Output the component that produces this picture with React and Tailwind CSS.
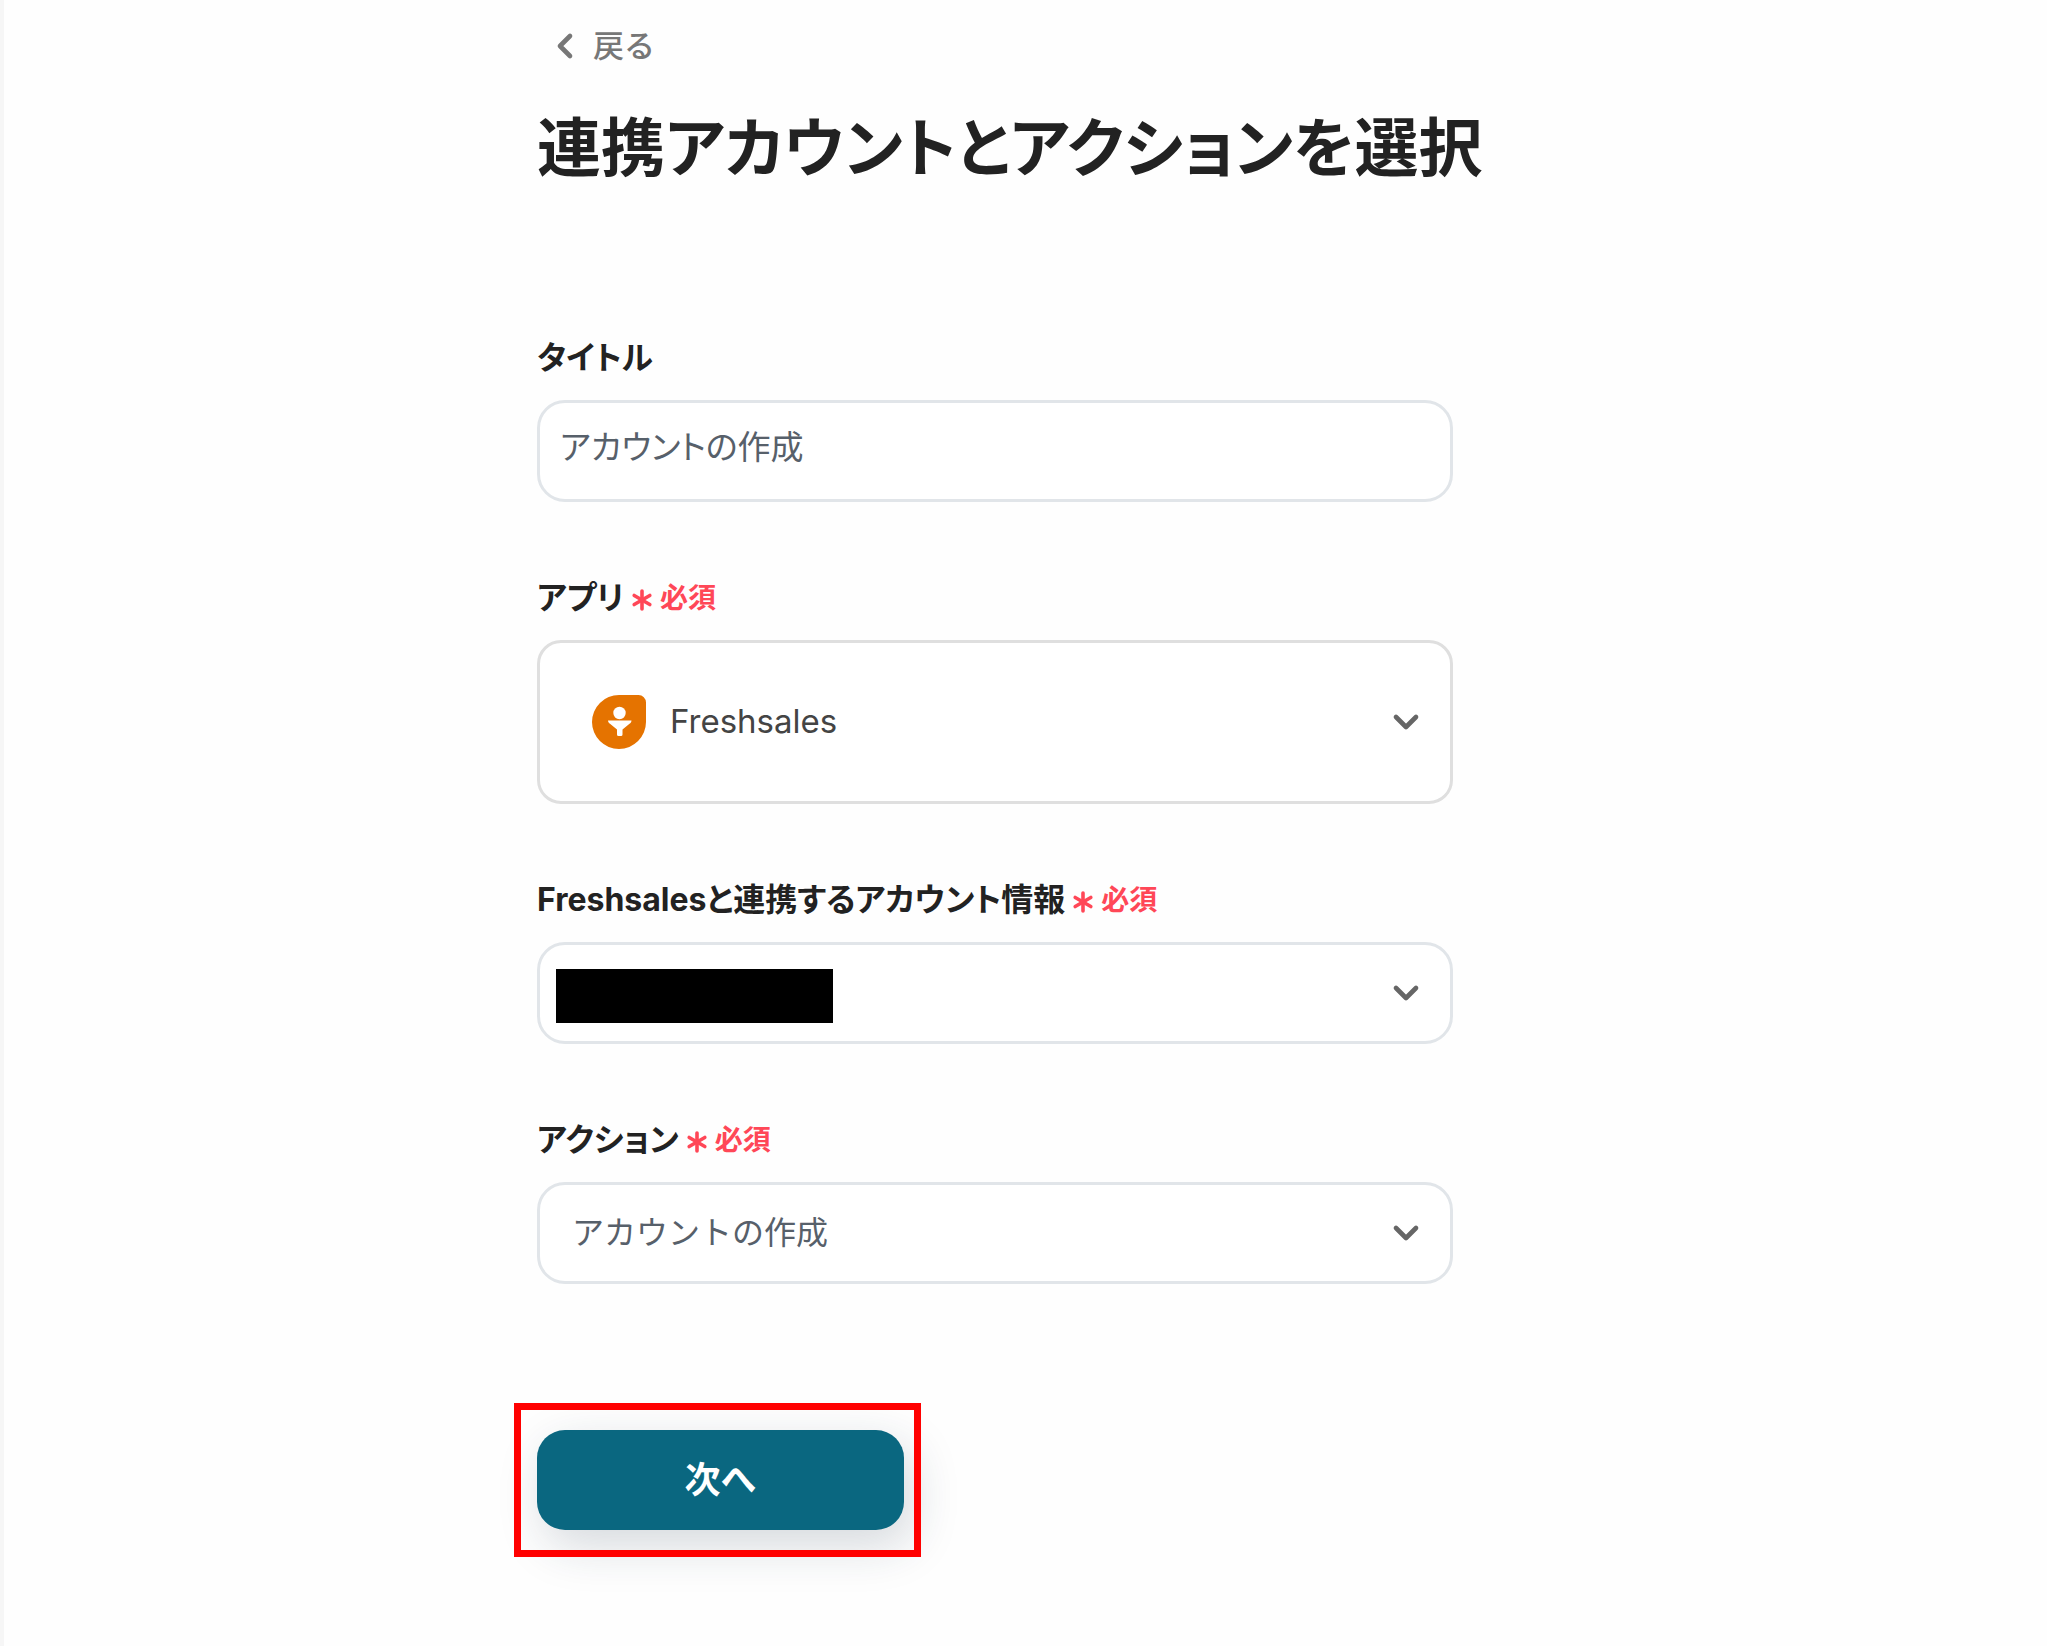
import React, { useState } from "react";
import { Asterisk, ChevronDown, ChevronLeft } from "lucide-react";

function FreshsalesLogo() {
  return (
    <svg viewBox="0 0 54 54" className="h-[54px] w-[54px] shrink-0" aria-hidden="true">
      <path
        d="M27 0H46.500A7.500 7.500 0 0 1 54 7.500V27A27 27 0 1 1 27 0Z"
        fill="#e57300"
      />
      <circle cx="27.500" cy="18" r="6.200" fill="#fff" />
      <path
        d="M16 25.500H39.500C39.500 27 38.500 28 37.500 28.800L30.500 34.500V39.500Q30.500 41 29 41H26.500Q25 41 25 39.500V34.500L18 28.800C17 28 16 27 16 25.500Z"
        fill="#fff"
      />
    </svg>
  );
}

function FieldLabel({ htmlFor, text, required }) {
  return (
    <label htmlFor={htmlFor} className="flex h-11 items-center text-[#222]">
      <span className="text-[32px] leading-11 font-bold [font-feature-settings:'palt']">
        {text}
      </span>
      {required && (
        <span className="flex items-center text-[28px] leading-11 font-bold text-[#ff4757]">
          <Asterisk size={36} strokeWidth={2.4} className="mt-1" />
          必須
        </span>
      )}
    </label>
  );
}

function SelectField({ id, value, className, selectClass, logo, masked }) {
  return (
    <div className={`relative mt-5 flex items-center border-3 bg-white ${className}`}>
      {logo}
      <select
        id={id}
        defaultValue={value}
        className={`h-full w-full appearance-none bg-transparent pr-20 outline-none ${selectClass}`}
      >
        <option value={value}>{value}</option>
      </select>
      {masked && (
        <span className="pointer-events-none absolute top-6 left-4 h-[54px] w-[277px] bg-black" />
      )}
      <ChevronDown
        size={40}
        strokeWidth={2.8}
        className="pointer-events-none absolute right-6 text-[#666]"
      />
    </div>
  );
}

function App() {
  const [title, setTitle] = useState("アカウントの作成");

  return (
    <div className="min-h-screen border-l-4 border-[#f6f6f6] bg-[#fefefe] font-[Inter,'Noto_Sans_CJK_JP',sans-serif]">
      <main className="mx-auto max-w-[977px] pt-[22px] pb-16">
        <a
          href="#back"
          className="ml-2 inline-flex items-center gap-2 text-[31px] leading-12 font-medium text-[#777]"
        >
          <ChevronLeft size={40} strokeWidth={2.8} />
          戻る
        </a>
        <h1 className="mt-7 text-[64px] leading-24 font-bold whitespace-nowrap text-[#222] [font-feature-settings:'palt']">
          連携アカウントとアクションを選択
        </h1>

        <form className="mt-[140px] max-w-[916px]" onSubmit={(e) => e.preventDefault()}>
          <div>
            <FieldLabel htmlFor="title" text="タイトル" />
            <input
              id="title"
              type="text"
              value={title}
              onChange={(e) => setTitle(e.target.value)}
              className="mt-5 h-[102px] w-full rounded-[28px] border-3 border-[#e1e5e9] bg-white px-5 pb-3 text-[33px] text-[#57606a] outline-none [font-feature-settings:'palt']"
            />
          </div>

          <div className="mt-[74px]">
            <FieldLabel htmlFor="app" text="アプリ" required />
            <SelectField
              id="app"
              value="Freshsales"
              logo={<FreshsalesLogo />}
              className="h-[164px] rounded-3xl border-[#dfdfdf] pl-[52px]"
              selectClass="pl-6 text-[33px] text-[#444]"
            />
          </div>

          <div className="mt-[74px]">
            <FieldLabel
              htmlFor="account"
              text="Freshsalesと連携するアカウント情報"
              required
            />
            <SelectField
              id="account"
              value=""
              masked
              className="h-[102px] rounded-[28px] border-[#e1e5e9]"
              selectClass="pl-8 text-[32px]"
            />
          </div>

          <div className="mt-[74px]">
            <FieldLabel htmlFor="action" text="アクション" required />
            <SelectField
              id="action"
              value="アカウントの作成"
              className="h-[102px] rounded-[28px] border-[#e1e5e9]"
              selectClass="pl-8 text-[32px] text-[#57606a]"
            />
          </div>

          <div className="relative mt-[146px] w-fit">
            <button
              type="submit"
              className="block h-[100px] w-[367px] rounded-[28px] bg-[#0a6780] text-[36px] leading-12 font-bold text-white shadow-[8px_16px_48px_rgba(30,50,70,0.18)]"
            >
              次へ
            </button>
            <span className="pointer-events-none absolute -top-[27px] -right-[17px] -bottom-[27px] -left-[23px] border-[7px] border-[#ff0000]" />
          </div>
        </form>
      </main>
    </div>
  );
}

export default App;
